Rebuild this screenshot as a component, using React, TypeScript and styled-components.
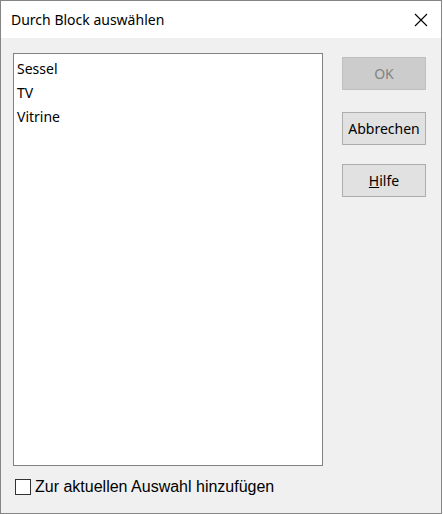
import styled, { createGlobalStyle } from 'styled-components';

const GlobalStyle = createGlobalStyle`
    html, body {
        margin: 0;
        padding: 0;
        background: #ffffff;
    }
    * {
        box-sizing: border-box;
    }
`

const Window = styled.div`
    width: 442px;
    height: 514px;
    border: 1px solid #858585;
    background-color: #f0f0f0;
    display: flex;
    flex-direction: column;
    font-family: "Noto Sans", "Open Sans", sans-serif;
    color: #000;
`

const TitleBar = styled.div`
    height: 37px;
    background-color: #ffffff;
    display: flex;
    align-items: center;
    justify-content: space-between;
    padding: 0 0 0 10px;
    flex-shrink: 0;
`

const TitleText = styled.span`
    font-size: 14px;
    line-height: 1;
    margin-top: 1px;
`

const CloseButton = styled.button`
    width: 40px;
    height: 37px;
    border: none;
    background: transparent;
    display: flex;
    align-items: center;
    justify-content: center;
    padding: 0;
`

const Body = styled.div`
    flex: 1;
    display: flex;
    flex-direction: column;
    padding: 15px 15px 0 12px;
`

const MainRow = styled.div`
    display: flex;
    gap: 19px;
`

const ListBox = styled.ul`
    width: 310px;
    height: 413px;
    margin: 0;
    padding: 3px 0 0 3px;
    list-style: none;
    background-color: #ffffff;
    border: 1px solid #828282;
`

const ListItem = styled.li`
    font-size: 14px;
    line-height: 24px;
    height: 24px;
`

const ButtonColumn = styled.div`
    display: flex;
    flex-direction: column;
    padding-top: 4px;
`

const DialogButton = styled.button<{ disabled?: boolean; $gap?: number }>`
    width: 84px;
    height: 33px;
    margin-top: ${p => p.$gap ?? 0}px;
    font-family: "Noto Sans", "Open Sans", sans-serif;
    font-size: 14px;
    padding: 0;
    color: ${p => p.disabled ? '#838383' : '#000'};
    background-color: ${p => p.disabled ? '#cccccc' : '#e1e1e1'};
    border: 1px solid ${p => p.disabled ? '#bfbfbf' : '#adadad'};
`

const CheckRow = styled.label`
    display: flex;
    align-items: center;
    gap: 4px;
    margin-top: 12px;
    margin-left: 2px;
    font-family: "Liberation Sans", Arial, sans-serif;
    font-size: 16px;
`

const CheckBox = styled.span`
    width: 16px;
    height: 16px;
    border: 1px solid #333;
    background-color: #fff;
    display: inline-block;
`

const CloseIcon = () => (
    <svg width="14" height="14" viewBox="0 0 14 14">
        <path d="M1 1 L13 13 M13 1 L1 13" stroke="#000" strokeWidth="1.1" fill="none" />
    </svg>
)

const items = ['Sessel', 'TV', 'Vitrine'];

const App = () => {
    return (
        <>
            <GlobalStyle />
            <Window>
                <TitleBar>
                    <TitleText>Durch Block auswählen</TitleText>
                    <CloseButton aria-label="Schließen">
                        <CloseIcon />
                    </CloseButton>
                </TitleBar>
                <Body>
                    <MainRow>
                        <ListBox>
                            {items.map(item => (
                                <ListItem key={item}>{item}</ListItem>
                            ))}
                        </ListBox>
                        <ButtonColumn>
                            <DialogButton disabled>OK</DialogButton>
                            <DialogButton $gap={22}>Abbrechen</DialogButton>
                            <DialogButton $gap={19}><u>H</u>ilfe</DialogButton>
                        </ButtonColumn>
                    </MainRow>
                    <CheckRow>
                        <CheckBox />
                        Zur aktuellen Auswahl hinzufügen
                    </CheckRow>
                </Body>
            </Window>
        </>
    );
}

export default App;
